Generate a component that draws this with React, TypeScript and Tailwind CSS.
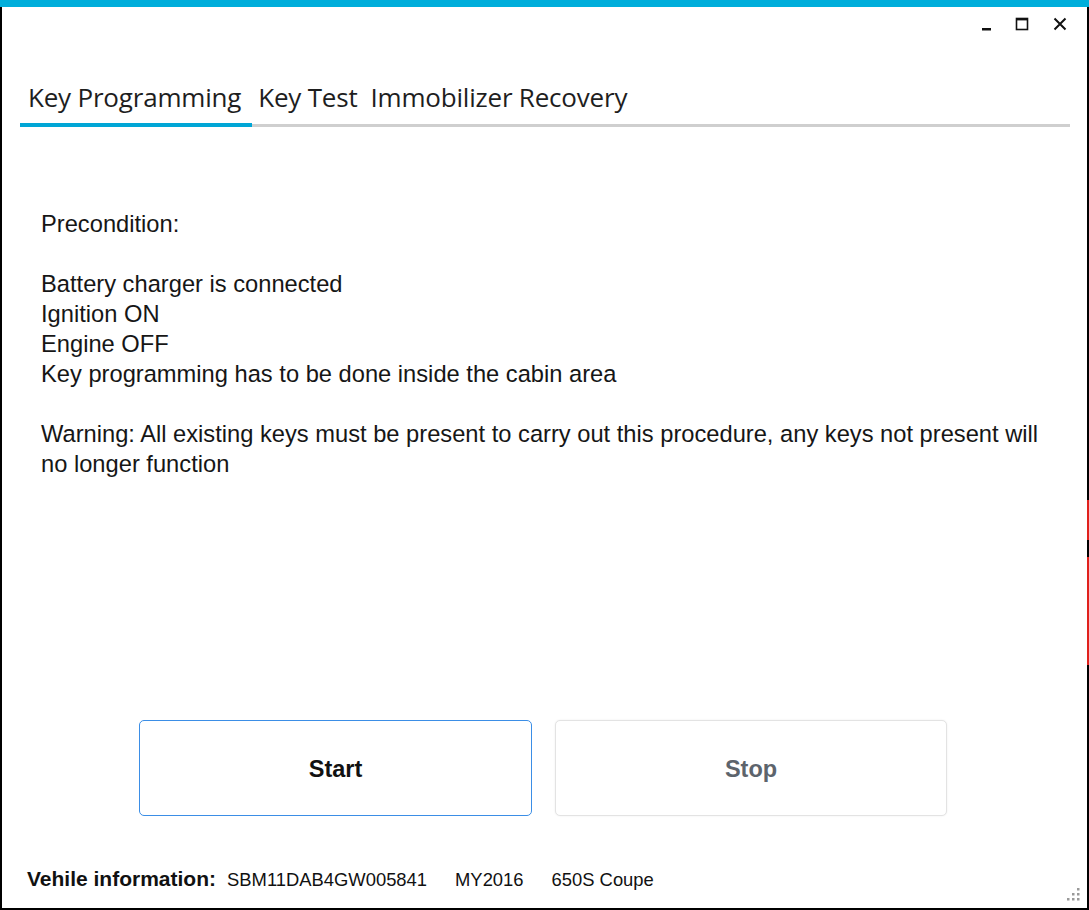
export default function App() {
  const tabs = [
    { label: "Key Programming", cls: "pl-[8px] pr-[11px] pb-[6px] border-b-4 border-[#00a6d6]" },
    { label: "Key Test", cls: "pl-[6px] pr-[7px] pb-[7px] border-b-[3px] border-[#cfcfcf]" },
    { label: "Immobilizer Recovery", cls: "pl-[6px] pr-[12px] pb-[7px] border-b-[3px] border-[#cfcfcf]" },
  ];

  return (
    <div className="relative w-[1089px] h-[910px] bg-white flex flex-col overflow-hidden">
      {/* top accent bar */}
      <div className="h-[7px] w-full bg-[#00aedb] shrink-0" />

      <div className="relative flex-1 flex flex-col border-l-2 border-r-2 border-b-2 border-black">
        {/* odd red marks on the right edge */}
        <div className="absolute right-[-2px] top-[493px] w-[2px] h-[40px] bg-[#e0201c]" />
        <div className="absolute right-[-2px] top-[550px] w-[2px] h-[108px] bg-[#e0201c]" />

        {/* window controls */}
        <div className="h-[70px] flex justify-end items-start gap-[24px] pr-[20px] pt-[10px]">
          <svg width="12" height="14" viewBox="0 0 12 14" className="mt-[1px]">
            <rect x="3" y="10" width="9" height="2.5" fill="#111" />
          </svg>
          <svg width="14" height="14" viewBox="0 0 14 14">
            <rect x="1.5" y="1.5" width="11" height="11" fill="none" stroke="#111" strokeWidth="1.6" />
            <rect x="1" y="1" width="12" height="2.4" fill="#111" />
          </svg>
          <svg width="14" height="14" viewBox="0 0 14 14">
            <path d="M1.5 1.5 L12.5 12.5 M12.5 1.5 L1.5 12.5" stroke="#111" strokeWidth="2" />
          </svg>
        </div>

        {/* tabs */}
        <div className="ml-[18px] mr-[17px] flex">
          {tabs.map((t) => (
            <div key={t.label} className={t.cls}>
              <span className="block text-[26px] leading-[40px] text-[#1e1e1e] font-['Open_Sans',sans-serif] tracking-[-0.2px]">
                {t.label}
              </span>
            </div>
          ))}
          <div className="flex-1 border-b-[3px] border-[#cfcfcf]" />
        </div>

        {/* preconditions */}
        <div className="pl-[39px] mt-[82px] text-[23.7px] leading-[30px] text-[#161616] font-['Liberation_Sans',Arial,sans-serif]">
          <p>Precondition:</p>
          <p>&nbsp;</p>
          <p>Battery charger is connected</p>
          <p>Ignition ON</p>
          <p>Engine OFF</p>
          <p>Key programming has to be done inside the cabin area</p>
          <p>&nbsp;</p>
          <p>
            Warning: All existing keys must be present to carry out this procedure, any keys not present will
            <br />
            no longer function
          </p>
        </div>

        {/* action buttons */}
        <div className="mt-[241px] pl-[137px] flex gap-[23px]">
          <button className="w-[393px] h-[96px] pt-[3px] rounded-[5px] border-[1.5px] border-[#3b8ee6] bg-white text-[23.5px] font-bold text-[#111] font-['Liberation_Sans',Arial,sans-serif]">
            Start
          </button>
          <button className="w-[392px] h-[96px] pt-[3px] rounded-[5px] border border-[#e3e3e3] bg-white shadow-[0_0_2px_rgba(0,0,0,0.08)] text-[23.5px] font-bold text-[#5d646c] font-['Liberation_Sans',Arial,sans-serif]">
            Stop
          </button>
        </div>

        {/* vehicle info */}
        <div className="mt-[50px] pl-[25px] flex items-baseline font-['Liberation_Sans',Arial,sans-serif] text-[#111]">
          <span className="text-[21px] font-bold leading-[24px]">Vehile information:</span>
          <span className="ml-[11px] text-[18.4px]">SBM11DAB4GW005841</span>
          <span className="ml-[28px] text-[18.4px]">MY2016</span>
          <span className="ml-[28px] text-[18.4px]">650S Coupe</span>
        </div>

        {/* resize grip */}
        <svg width="14" height="14" viewBox="0 0 14 14" className="absolute right-[6px] bottom-[6px]">
          <rect x="10" y="0" width="2.5" height="2.5" fill="#9a9a9a" />
          <rect x="5" y="5" width="2.5" height="2.5" fill="#9a9a9a" />
          <rect x="10" y="5" width="2.5" height="2.5" fill="#9a9a9a" />
          <rect x="0" y="10" width="2.5" height="2.5" fill="#9a9a9a" />
          <rect x="5" y="10" width="2.5" height="2.5" fill="#9a9a9a" />
          <rect x="10" y="10" width="2.5" height="2.5" fill="#9a9a9a" />
        </svg>
      </div>
    </div>
  );
}
